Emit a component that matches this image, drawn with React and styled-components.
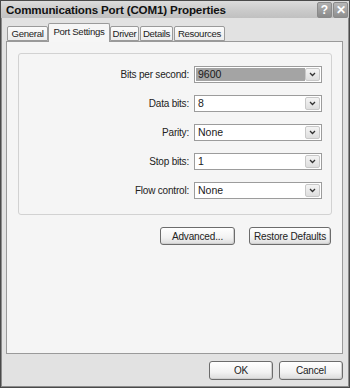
import React from "react";
import styled, { createGlobalStyle } from "styled-components";

const GlobalStyle = createGlobalStyle`
  html, body {
    margin: 0;
    padding: 0;
    background: #ffffff;
  }

  body {
    font-family: "Liberation Sans", Arial, sans-serif;
  }
`;

const Window = styled.div`
  box-sizing: border-box;
  display: flex;
  flex-direction: column;

  width: 350px;
  height: 388px;

  border: 1px solid #4a4a4a;
  box-shadow: inset 1px 0 0 #8c8c8c, inset -1px 0 0 #8c8c8c,
    inset 0 -1px 0 #8c8c8c;

  background: #e2e2e2;
`;

const TitleBar = styled.div`
  display: flex;
  align-items: center;
  justify-content: space-between;

  height: 17px;
  padding: 0 1px 0 5px;

  background: linear-gradient(180deg, #dcdcdc 0%, #cbcbcb 55%, #c0c0c0 100%);
`;

const TitleText = styled.span`
  color: #111111;
  font-size: 11.6px;
  font-weight: 700;
  letter-spacing: -0.15px;
`;

const TitleButtons = styled.div`
  display: flex;
  gap: 1px;
`;

const TitleButton = styled.span`
  display: grid;
  place-items: center;

  width: 13px;
  height: 14px;

  color: #ffffff;
  font-size: 12px;
  font-weight: 700;
  line-height: 1;

  border: 1px solid #8a8a8a;
  border-radius: 2px;

  background: ${({ $close }) =>
    $close
      ? "linear-gradient(180deg, #b8b8b8, #8e8e8e)"
      : "linear-gradient(180deg, #b0b0b0, #8a8a8a)"};
`;

const Body = styled.div`
  display: flex;
  flex: 1;
  flex-direction: column;

  padding: 5px 6px 7px 5px;
`;

const TabRow = styled.div`
  display: flex;
  align-items: flex-end;

  height: 18px;
  padding-left: 1px;
`;

const Tab = styled.div`
  box-sizing: border-box;
  position: relative;

  width: ${({ $width }) => $width}px;
  height: ${({ $active }) => ($active ? "19px" : "15px")};
  margin-right: ${({ $active }) => ($active ? "0" : "1px")};
  margin-left: ${({ $active }) => ($active ? "-1px" : "0")};
  margin-bottom: ${({ $active }) => ($active ? "-1px" : "0")};
  padding-top: ${({ $active }) => ($active ? "2px" : "1px")};

  color: #222222;
  font-size: 9.6px;
  letter-spacing: -0.3px;
  text-align: center;
  white-space: nowrap;

  border: 1px solid #9a9a9a;
  border-bottom: ${({ $active }) => ($active ? "none" : "1px solid #9a9a9a")};
  border-radius: 2px 2px 0 0;

  background: ${({ $active }) =>
    $active ? "#f6f6f6" : "linear-gradient(180deg, #fbfbfb, #ececec)"};

  z-index: ${({ $active }) => ($active ? 1 : 0)};
`;

const TabPanel = styled.div`
  box-sizing: border-box;
  flex: 1;

  padding: 11px 10px 0 11px;

  border: 1px solid #9a9a9a;
  background: #f5f5f5;
`;

const GroupBox = styled.div`
  display: grid;
  grid-template-columns: 1fr 128px;
  align-items: center;
  row-gap: 12px;
  column-gap: 5px;

  padding: 12px 9px 15px 0;

  border: 1px solid #d2d2d2;
  border-radius: 3px;
`;

const FieldLabel = styled.label`
  color: #222222;
  font-size: 10px;
  text-align: right;
  letter-spacing: -0.2px;
`;

const Select = styled.div`
  box-sizing: border-box;
  display: flex;
  align-items: stretch;

  height: 17px;
  padding: 1px;

  border: 1px solid #9c9c9c;
  background: #ffffff;
`;

const SelectValue = styled.span`
  flex: 1;

  padding-left: 2px;

  color: #1a1a1a;
  font-size: 10.5px;
  line-height: 13px;

  background: ${({ $focused }) => ($focused ? "#a4a4a4" : "transparent")};
`;

const SelectArrow = styled.span`
  box-sizing: border-box;
  display: grid;
  place-items: center;

  width: 15px;

  border: 1px solid #c8c8c8;
  border-radius: 2px;

  background: linear-gradient(180deg, #f4f4f4, #dedede);

  svg {
    display: block;
  }
`;

const ActionRow = styled.div`
  display: flex;
  justify-content: flex-end;
  gap: ${({ $gap }) => $gap}px;

  margin-top: ${({ $top }) => $top}px;
  padding-right: ${({ $right }) => $right}px;
`;

const Button = styled.button`
  box-sizing: border-box;

  width: ${({ $width }) => $width}px;
  height: ${({ $height }) => $height}px;
  padding: 0;

  color: #222222;
  font-family: "Liberation Sans", Arial, sans-serif;
  font-size: 10px;
  letter-spacing: -0.15px;

  border: 1px solid #6c6c6c;
  border-radius: 3px;

  background: linear-gradient(180deg, #ffffff 0%, #f2f2f2 60%, #dcdcdc 100%);
  box-shadow: inset -1px -1px 0 #cfcfcf;
`;

const fields = [
  { label: "Bits per second:", value: "9600", focused: true },
  { label: "Data bits:", value: "8" },
  { label: "Parity:", value: "None" },
  { label: "Stop bits:", value: "1" },
  { label: "Flow control:", value: "None" },
];

const tabs = [
  { name: "General", width: 41 },
  { name: "Port Settings", width: 62, active: true },
  { name: "Driver", width: 29 },
  { name: "Details", width: 33 },
  { name: "Resources", width: 51 },
];

function Chevron() {
  return (
    <svg width="7" height="5" viewBox="0 0 7 5" aria-hidden="true">
      <path d="M1 1 L3.5 3.5 L6 1" fill="none" stroke="#333" strokeWidth="1.3" />
    </svg>
  );
}

export default function App() {
  return (
    <>
      <GlobalStyle />
      <Window>
        <TitleBar>
          <TitleText>Communications Port (COM1) Properties</TitleText>
          <TitleButtons>
            <TitleButton>?</TitleButton>
            <TitleButton $close>✕</TitleButton>
          </TitleButtons>
        </TitleBar>

        <Body>
          <TabRow>
            {tabs.map((tab) => (
              <Tab key={tab.name} $active={tab.active} $width={tab.width}>
                {tab.name}
              </Tab>
            ))}
          </TabRow>

          <TabPanel>
            <GroupBox>
              {fields.map((field) => (
                <React.Fragment key={field.label}>
                  <FieldLabel>{field.label}</FieldLabel>
                  <Select>
                    <SelectValue $focused={field.focused}>
                      {field.value}
                    </SelectValue>
                    <SelectArrow>
                      <Chevron />
                    </SelectArrow>
                  </Select>
                </React.Fragment>
              ))}
            </GroupBox>

            <ActionRow $gap={14} $top={12} $right={1}>
              <Button $width={75} $height={18}>
                Advanced...
              </Button>
              <Button $width={82} $height={18}>
                Restore Defaults
              </Button>
            </ActionRow>
          </TabPanel>

          <ActionRow $gap={6} $top={7} $right={0}>
            <Button $width={64} $height={19}>
              OK
            </Button>
            <Button $width={64} $height={19}>
              Cancel
            </Button>
          </ActionRow>
        </Body>
      </Window>
    </>
  );
}
